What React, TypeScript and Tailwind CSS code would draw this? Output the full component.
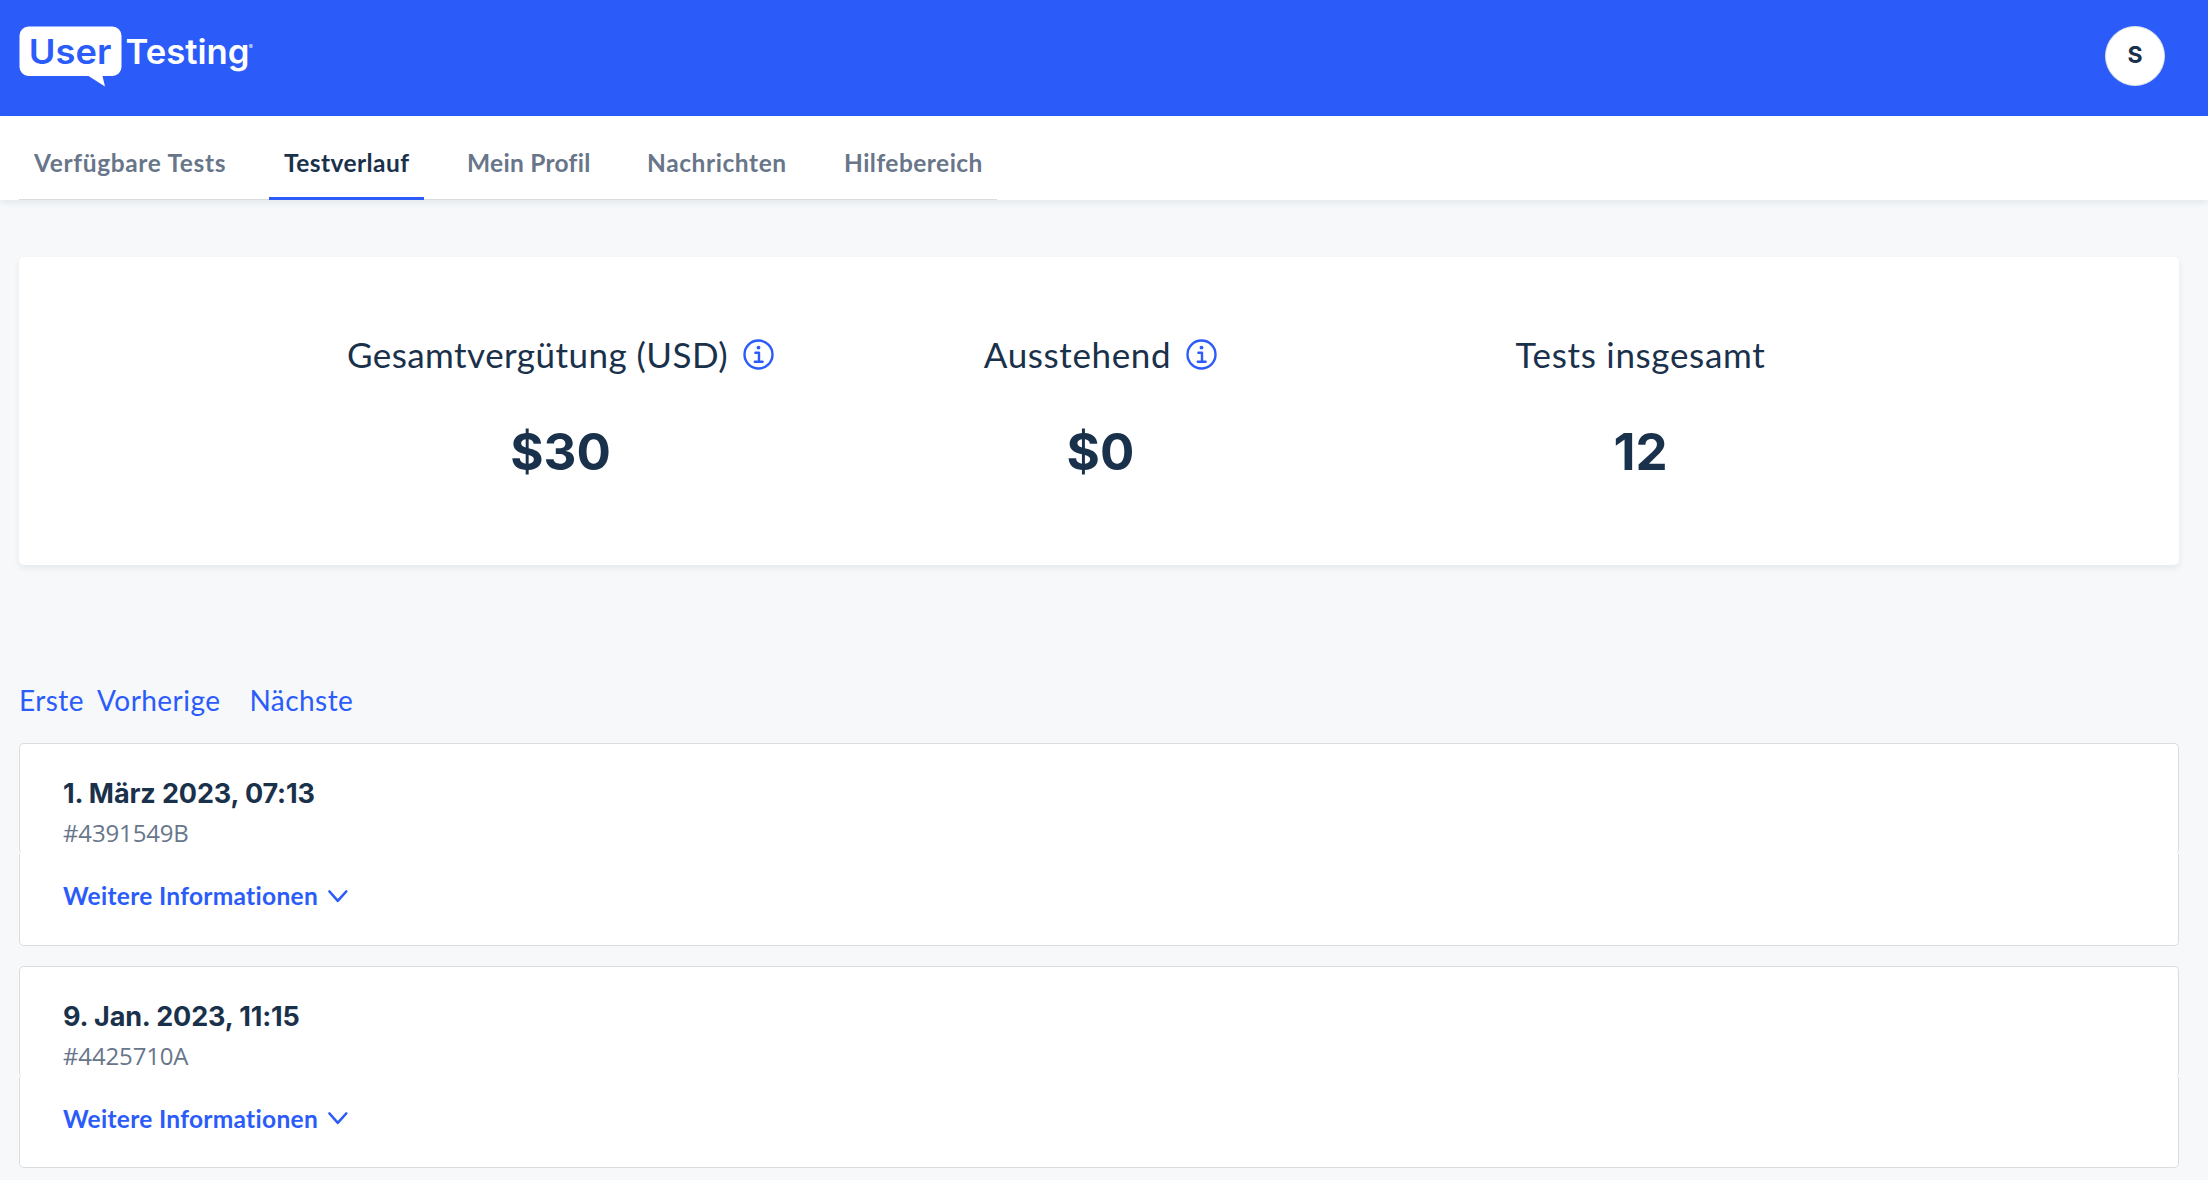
import clsx from 'clsx';

const tabs = [
    { label: "Verfügbare Tests", className: "w-[222px] tracking-[0.65px]" },
    { label: "Testverlauf", className: "w-[155px] tracking-[0.44px]", active: true },
    { label: "Mein Profil", className: "w-[152px] tracking-[0.28px]" },
    { label: "Nachrichten", className: "w-[169px] tracking-[0.58px]" },
    { label: "Hilfebereich", className: "w-[168px] tracking-[0.47px]" },
];

const stats = [
    { label: "Gesamtvergütung (USD)", value: "$30", info: true, className: "tracking-[0.45px]" },
    { label: "Ausstehend", value: "$0", info: true, className: "tracking-[0.62px]" },
    { label: "Tests insgesamt", value: "12", info: false, className: "tracking-[0.68px]" },
];

const sessions = [
    { date: "1. März 2023, 07:13", id: "#4391549B" },
    { date: "9. Jan. 2023, 11:15", id: "#4425710A" },
];

function Logo() {
    return (
        <svg width="240" height="64" viewBox="0 0 240 64" className="font-['Inter',sans-serif]" role="img" aria-label="UserTesting">
            <path
                d="M9.5 2.5h84a9 9 0 0 1 9 9V43a9 9 0 0 1-9 9H83.5l2.5 10.5L69.5 52h-60a9 9 0 0 1-9-9V11.5a9 9 0 0 1 9-9z"
                fill="#fff"
            />
            <text x="9.8" y="39.8" fontSize="34.5" fontWeight="600" textLength="82.5" lengthAdjust="spacingAndGlyphs" fill="#2b5cfa">User</text>
            <text x="106.5" y="39.8" fontSize="34" fontWeight="600" textLength="124" lengthAdjust="spacingAndGlyphs" fill="#fff">Testing</text>
            <text x="229.8" y="24.5" fontSize="6" fill="#fff">®</text>
        </svg>
    );
}

function InfoIcon() {
    return (
        <svg width="31" height="31" viewBox="0 0 31 31" fill="none" stroke="#2b5cfa" strokeWidth="2.4" strokeLinecap="round" strokeLinejoin="round">
            <circle cx="15.5" cy="15.5" r="14" />
            <path d="M12.4 13.7h3.6v9M11.8 22.8h7.8" />
            <circle cx="15.5" cy="8.6" r="1.9" fill="#2b5cfa" stroke="none" />
        </svg>
    );
}

function Stat({ label, value, info, className }: (typeof stats)[number]) {
    return (
        <div className="w-[540px] flex flex-col items-center gap-12">
            <div className="flex items-center gap-[15px] pl-[3px]">
                <h2 className={clsx("text-[35px] leading-10", className)}>{label}</h2>
                {info && <InfoIcon />}
            </div>
            <p className="pl-[3px] font-['Inter',sans-serif] text-[51px] leading-[60px] font-bold">{value}</p>
        </div>
    );
}

function SessionCard({ date, id }: (typeof sessions)[number]) {
    return (
        <article>
            <div className="h-[111px] rounded-[5px] border border-[#dadde0] border-b-white bg-white px-[43px] pt-[34px]">
                <h3 className="font-['Inter',sans-serif] text-[27px] leading-8 font-bold tracking-[-0.12px]">{date}</h3>
                <p className="mt-[9px] font-['Open_Sans',sans-serif] text-2xl leading-7 tracking-[-0.15px] text-[#68768a]">{id}</p>
            </div>
            <div className="h-[91.5px] rounded-b-[5px] border border-t-0 border-[#dadde0] bg-white px-[43px] pt-[27px]">
                <button className="flex items-center gap-2.5 text-[24.5px] leading-[30px] font-bold tracking-[0.3px] text-[#2b5cfa]">
                    Weitere Informationen
                    <svg width="20" height="13" viewBox="0 0 20 13" fill="none" stroke="currentColor" strokeWidth="2.6" strokeLinecap="round" strokeLinejoin="round">
                        <path d="M1.5 1.5 9.8 10.8 18.2 1.5" />
                    </svg>
                </button>
            </div>
        </article>
    );
}

export default function App() {
    return (
        <div className="h-[1180px] overflow-hidden bg-[#f6f8fa] font-['Lato',sans-serif] text-[#1a314b]">
            <header className="h-[116px] flex items-start justify-between bg-[#2b5cfa] pl-[19px] pr-[43px]">
                <div className="pt-6">
                    <Logo />
                </div>
                <button className="mt-[26px] size-[60px] rounded-full border border-[#dadde0] bg-white pb-0.5 font-['Inter',sans-serif] text-[23px] leading-none font-bold">
                    S
                </button>
            </header>

            <nav className="h-[84px] flex bg-white pl-[19px] shadow-[0_3px_6px_rgba(40,70,60,0.08)]">
                <div className="flex gap-7 border-b border-[#dadde0]">
                    {tabs.map((tab) => (
                        <a
                            key={tab.label}
                            className={clsx(
                                "h-[84px] px-[15px] pt-8 text-[24.5px] leading-[30px] font-bold whitespace-nowrap",
                                tab.className,
                                tab.active ? "border-b-3 border-[#2b5cfa]" : "text-[#68768a]"
                            )}
                        >
                            {tab.label}
                        </a>
                    ))}
                </div>
            </nav>

            <main className="pl-[19px] pr-[29px] pt-[57px]">
                <section className="h-[308px] flex justify-center rounded-[5px] bg-white pt-[77px] shadow-[0_3px_6px_rgba(40,70,60,0.08)]">
                    {stats.map((stat) => (
                        <Stat key={stat.label} {...stat} />
                    ))}
                </section>

                <div className="mt-[118px] flex text-[28px] leading-[34px] tracking-[0.45px] text-[#2b5cfa]">
                    <a>Erste</a>
                    <a className="ml-[13px]">Vorherige</a>
                    <a className="ml-[29px]">Nächste</a>
                </div>

                <div className="mt-[26px] flex flex-col gap-5">
                    {sessions.map((session) => (
                        <SessionCard key={session.id} {...session} />
                    ))}
                </div>
            </main>
        </div>
    );
}
